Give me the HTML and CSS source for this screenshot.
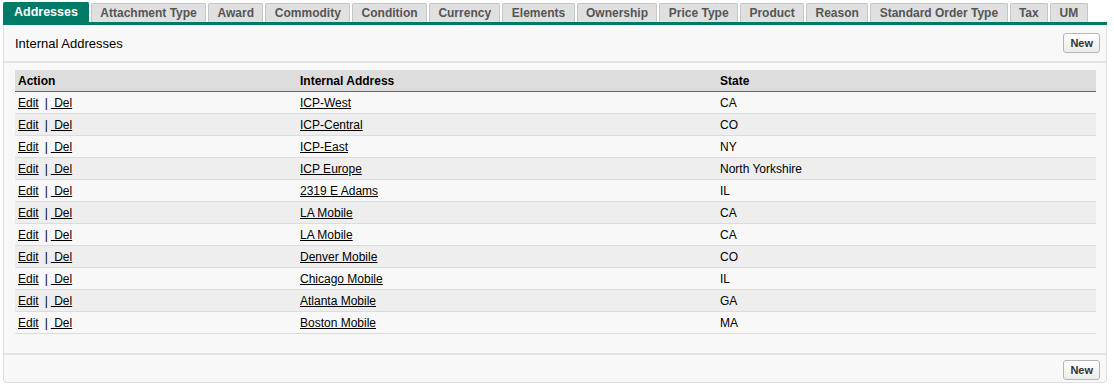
FILE: index.html
```html
<!DOCTYPE html>
<html lang="en">
<head>
  <meta charset="UTF-8">
  <title>Internal Addresses</title>
  <link rel="stylesheet" href="styles.css">
</head>
<body>
  <div id="page">
    <ul class="tabs">
      <li class="tab active">Addresses</li>
      <li class="tab">Attachment Type</li>
      <li class="tab">Award</li>
      <li class="tab">Commodity</li>
      <li class="tab">Condition</li>
      <li class="tab">Currency</li>
      <li class="tab">Elements</li>
      <li class="tab">Ownership</li>
      <li class="tab">Price Type</li>
      <li class="tab">Product</li>
      <li class="tab">Reason</li>
      <li class="tab">Standard Order Type</li>
      <li class="tab">Tax</li>
      <li class="tab">UM</li>
    </ul>

    <div class="panel">
      <div class="panel-header">
        <h2>Internal Addresses</h2>
        <button class="btn">New</button>
      </div>

      <div class="panel-body">
        <table class="list">
          <thead>
            <tr>
              <th class="col-action">Action</th>
              <th class="col-address">Internal Address</th>
              <th>State</th>
            </tr>
          </thead>
          <tbody>
            <tr><td><a href="#">Edit</a><span class="sep">|</span><a href="#">&nbsp;Del</a></td><td><a href="#">ICP-West</a></td><td>CA</td></tr>
            <tr><td><a href="#">Edit</a><span class="sep">|</span><a href="#">&nbsp;Del</a></td><td><a href="#">ICP-Central</a></td><td>CO</td></tr>
            <tr><td><a href="#">Edit</a><span class="sep">|</span><a href="#">&nbsp;Del</a></td><td><a href="#">ICP-East</a></td><td>NY</td></tr>
            <tr><td><a href="#">Edit</a><span class="sep">|</span><a href="#">&nbsp;Del</a></td><td><a href="#">ICP Europe</a></td><td>North Yorkshire</td></tr>
            <tr><td><a href="#">Edit</a><span class="sep">|</span><a href="#">&nbsp;Del</a></td><td><a href="#">2319 E Adams</a></td><td>IL</td></tr>
            <tr><td><a href="#">Edit</a><span class="sep">|</span><a href="#">&nbsp;Del</a></td><td><a href="#">LA Mobile</a></td><td>CA</td></tr>
            <tr><td><a href="#">Edit</a><span class="sep">|</span><a href="#">&nbsp;Del</a></td><td><a href="#">LA Mobile</a></td><td>CA</td></tr>
            <tr><td><a href="#">Edit</a><span class="sep">|</span><a href="#">&nbsp;Del</a></td><td><a href="#">Denver Mobile</a></td><td>CO</td></tr>
            <tr><td><a href="#">Edit</a><span class="sep">|</span><a href="#">&nbsp;Del</a></td><td><a href="#">Chicago Mobile</a></td><td>IL</td></tr>
            <tr><td><a href="#">Edit</a><span class="sep">|</span><a href="#">&nbsp;Del</a></td><td><a href="#">Atlanta Mobile</a></td><td>GA</td></tr>
            <tr><td><a href="#">Edit</a><span class="sep">|</span><a href="#">&nbsp;Del</a></td><td><a href="#">Boston Mobile</a></td><td>MA</td></tr>
          </tbody>
        </table>
      </div>

      <div class="panel-footer">
        <button class="btn">New</button>
      </div>
    </div>
  </div>
</body>
</html>
```

FILE: styles.css
```css
body {
  font-family: Arial, "Liberation Sans", sans-serif;
  font-size: 12px;
  color: #000;
  margin: 0;
  background: #fff;
}

#page {
  width: 1104px;
  padding: 2px 0 0 3px;
}

.tabs {
  display: flex;
  align-items: flex-end;
  gap: 2px;
  list-style: none;
  margin: 0;
  padding: 0;
  border-bottom: 3px solid #017a68;
}

.tab {
  flex-shrink: 0;
  white-space: nowrap;
  height: 18px;
  line-height: 19px;
  padding: 0 8.4px;
  font-weight: bold;
  font-size: 12px;
  color: #555;
  background: #e0e0e0;
  border: 1px solid #c6c6c6;
  border-bottom: none;
  border-radius: 2px 2px 0 0;
}

.tab.active {
  background: #017a68;
  border-color: #017a68;
  color: #fff;
  height: 19px;
  line-height: 19px;
  padding: 0 10px;
  font-size: 12.5px;
}

.panel {
  background: #f8f8f8;
  border: 1px solid #e0e0e0;
  border-top: none;
  border-radius: 0 0 4px 4px;
  width: 1102px;
}

.panel-header {
  display: flex;
  align-items: center;
  justify-content: space-between;
  height: 36px;
  padding: 0 6px 0 11px;
  border-bottom: 2px solid #e3e3e3;
}

.panel-header h2 {
  margin: 0;
  font-size: 13px;
  font-weight: normal;
}

.btn {
  font-family: Arial, "Liberation Sans", sans-serif;
  font-size: 11px;
  font-weight: bold;
  color: #333;
  background: linear-gradient(#ffffff, #ececec);
  border: 1px solid #b5b5b5;
  border-radius: 3px;
  height: 20px;
  padding: 0 6px;
}

.panel-body {
  padding: 7px 11px 19px 11px;
  border-bottom: 2px solid #e3e3e3;
}

.list {
  width: 1081px;
  border-collapse: collapse;
}

.list th {
  background: #dddddd;
  text-align: left;
  font-weight: bold;
  height: 21px;
  padding: 0 3px;
  border-bottom: 1px solid #666;
}

.list td {
  height: 21px;
  padding: 0 3px;
  border-bottom: 1px solid #dcdcdc;
}

.list tbody tr:nth-child(even) {
  background: #eeeeee;
}

.col-action {
  width: 276px;
}

.col-address {
  width: 414px;
}

.list a {
  color: #000;
}

.sep {
  margin: 0 3px 0 6px;
}

.panel-footer {
  display: flex;
  justify-content: flex-end;
  padding: 5px 6px 2px 0;
}
```
